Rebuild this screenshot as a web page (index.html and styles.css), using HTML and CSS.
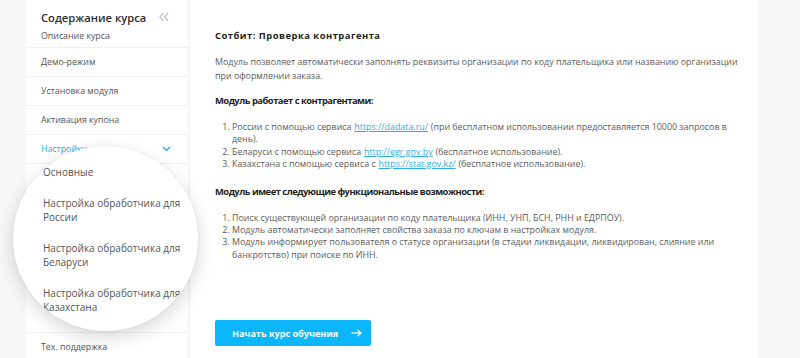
FILE: index.html
```html
<!DOCTYPE html>
<html lang="ru">
<head>
    <meta charset="UTF-8">
    <meta name="viewport" content="width=device-width, initial-scale=1.0">
    <title>Сотбит: Проверка контрагента</title>
    <link rel="stylesheet" href="styles.css">
</head>
<body>
    <div class="page">
        <aside class="toc">
            <div class="toc-head">
                <span class="toc-title">Содержание курса</span>
                <svg class="toc-collapse" width="10" height="10" viewBox="0 0 10 10">
                    <polyline points="4.5,1 1,5 4.5,9" fill="none" stroke="#c4c4c4" stroke-width="1.3"/>
                    <polyline points="9,1 5.5,5 9,9" fill="none" stroke="#c4c4c4" stroke-width="1.3"/>
                </svg>
            </div>
            <div class="toc-item toc-item-first">Описание курса</div>
            <div class="toc-item">Демо-режим</div>
            <div class="toc-item">Установка модуля</div>
            <div class="toc-item">Активация купона</div>
            <div class="toc-item toc-item-open">
                <span>Настройки</span>
                <svg width="9" height="6" viewBox="0 0 9 6">
                    <polyline points="1,1 4.5,4.5 8,1" fill="none" stroke="#2eaee6" stroke-width="1.5"/>
                </svg>
            </div>
            <div class="toc-sub"></div>
            <div class="toc-item">Тех. поддержка</div>

            <div class="magnifier">
                <div class="magnifier-list">
                    <div class="magnifier-item">Основные</div>
                    <div class="magnifier-item">Настройка обработчика для<br>России</div>
                    <div class="magnifier-item">Настройка обработчика для<br>Беларуси</div>
                    <div class="magnifier-item">Настройка обработчика для<br>Казахстана</div>
                </div>
            </div>
        </aside>

        <main class="content">
            <h2 class="content-title">Сотбит: Проверка контрагента</h2>
            <p class="content-text">Модуль позволяет автоматически заполнять реквизиты организации по коду плательщика или названию организации при оформлении заказа.</p>

            <h3 class="content-subtitle">Модуль работает с контрагентами:</h3>
            <ol class="content-list">
                <li>России с помощью сервиса <a href="#">https://dadata.ru/</a> (при бесплатном использовании предоставляется 10000 запросов в день).</li>
                <li>Беларуси с помощью сервиса <a href="#">http://egr.gov.by</a> (бесплатное использование).</li>
                <li>Казахстана с помощью сервиса с <a href="#">https://stat.gov.kz/</a> (бесплатное использование).</li>
            </ol>

            <h3 class="content-subtitle">Модуль имеет следующие функциональные возможности:</h3>
            <ol class="content-list">
                <li>Поиск существующей организации по коду плательщика (ИНН, УНП, БСН, РНН и ЕДРПОУ).</li>
                <li>Модуль автоматически заполняет свойства заказа по ключам в настройках модуля.</li>
                <li>Модуль информирует пользователя о статусе организации (в стадии ликвидации, ликвидирован, слияние или банкротство) при поиске по ИНН.</li>
            </ol>

            <button class="start-btn">
                <span>Начать курс обучения</span>
                <svg width="11" height="8" viewBox="0 0 11 8">
                    <line x1="0.5" y1="4" x2="10" y2="4" stroke="#fff" stroke-width="1.2"/>
                    <polyline points="6.5,0.8 10,4 6.5,7.2" fill="none" stroke="#fff" stroke-width="1.2"/>
                </svg>
            </button>
        </main>
    </div>
</body>
</html>
```

FILE: styles.css
```css
body {
    margin: 0;
    background: #f7f7f8;
    font-family: 'Open Sans', 'Noto Sans', sans-serif;
    color: #5c5c5c;
    height: 358px;
    overflow: hidden;
}
.page {
    display: flex;
    padding-left: 26px;
    height: 358px;
}
.toc {
    position: relative;
    width: 162px;
    background: #fff;
    border-right: 2px solid #f5f5f6;
}
.toc-head {
    display: flex;
    align-items: center;
    justify-content: space-between;
    height: 20px;
    padding: 7px 19px 0 15px;
}
.toc-title {
    font-size: 11.2px;
    font-weight: 600;
    color: #2d2d2d;
}
.toc-item {
    height: 28px;
    line-height: 28px;
    padding: 0 15px;
    font-size: 8.8px;
    color: #555;
    border-bottom: 1px solid #f0f0f0;
}
.toc-item-first {
    height: 20px;
    line-height: 18px;
}
.toc-item-open {
    display: flex;
    align-items: center;
    justify-content: space-between;
    color: #2eaee6;
    padding-right: 17px;
}
.toc-sub {
    height: 168px;
    border-bottom: 1px solid #f0f0f0;
}
.magnifier {
    position: absolute;
    left: -13px;
    top: 146px;
    width: 185px;
    height: 185px;
    border-radius: 50%;
    overflow: hidden;
    background: #fff;
    box-shadow: 0 6px 18px rgba(0, 0, 0, 0.16), 0 0 3px rgba(0, 0, 0, 0.05);
}
.magnifier-list {
    padding: 19px 0 0 30px;
    width: 200px;
}
.magnifier-item {
    font-size: 10px;
    line-height: 14px;
    color: #555;
    white-space: nowrap;
    margin-bottom: 17px;
}
.content {
    width: 543px;
    background: #fff;
    padding: 0 0 0 25px;
}
.content-title,
.content-subtitle {
    font-size: 9.4px;
    font-weight: 700;
    color: #1e1e1e;
    margin: 0;
    line-height: 14px;
}
.content-title {
    margin-top: 29px;
    letter-spacing: 0.5px;
}
.content-subtitle {
    margin-top: 11px;
    letter-spacing: -0.5px;
}
.content-text {
    width: 525px;
    margin: 12px 0 0;
    font-size: 8.9px;
    line-height: 14px;
}
.content-list {
    width: 508px;
    margin: 13px 0 0;
    padding: 0 0 3px 17px;
    font-size: 8.9px;
    line-height: 12.4px;
}
.content-list a {
    color: #2eaee6;
    margin: 0 0.5px;
}
.start-btn {
    display: flex;
    align-items: center;
    gap: 13px;
    margin-top: 56px;
    width: 156px;
    height: 26px;
    padding: 0 0 0 17px;
    border: none;
    border-radius: 2px;
    background: #0bb6fb;
    color: #fff;
    font-family: inherit;
    font-size: 9.1px;
    font-weight: 700;
}
```
